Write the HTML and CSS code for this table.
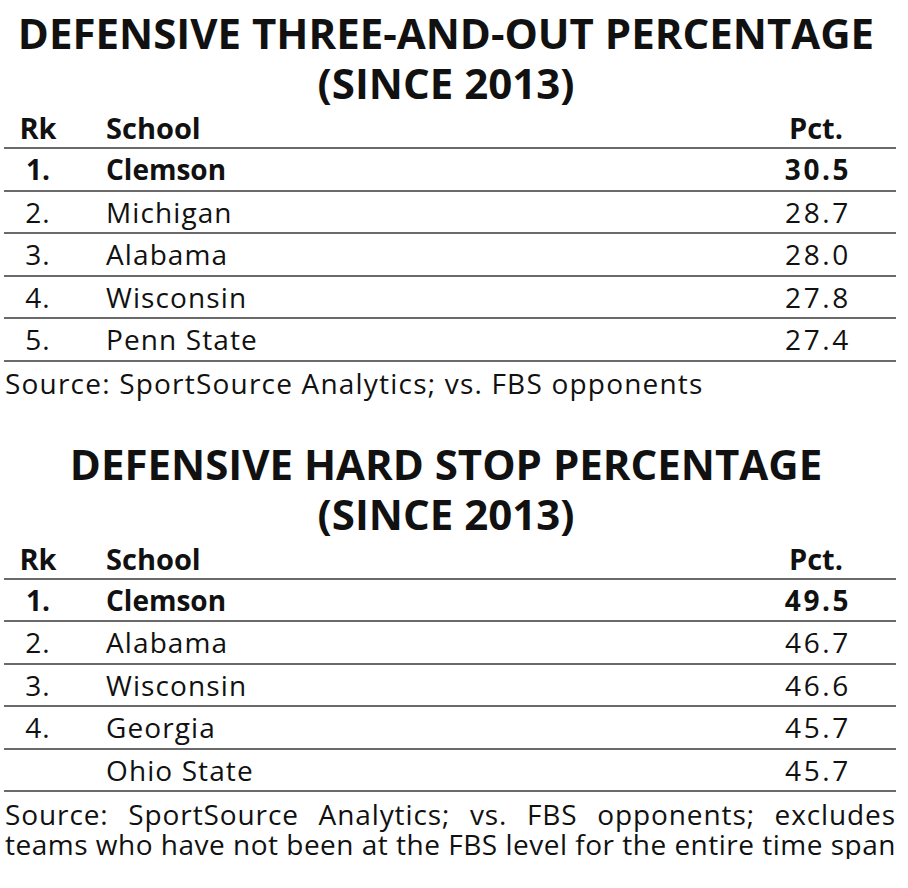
FILE: index.html
```html
<!DOCTYPE html>
<html lang="en">
<head>
<meta charset="utf-8">
<title>Defensive percentages</title>
<link rel="stylesheet" href="styles.css">
</head>
<body>
<section class="block">
  <h2 class="title">DEFENSIVE THREE-AND-OUT PERCENTAGE<br>(SINCE 2013)</h2>
  <div class="table">
    <div class="row head"><span class="rk">Rk</span><span class="school">School</span><span class="pct">Pct.</span></div>
    <div class="row lead"><span class="rk">1.</span><span class="school">Clemson</span><span class="pct">30.5</span></div>
    <div class="row"><span class="rk">2.</span><span class="school">Michigan</span><span class="pct">28.7</span></div>
    <div class="row"><span class="rk">3.</span><span class="school">Alabama</span><span class="pct">28.0</span></div>
    <div class="row"><span class="rk">4.</span><span class="school">Wisconsin</span><span class="pct">27.8</span></div>
    <div class="row"><span class="rk">5.</span><span class="school">Penn State</span><span class="pct">27.4</span></div>
  </div>
  <p class="source">Source: SportSource Analytics; vs. FBS opponents</p>
</section>
<section class="block second">
  <h2 class="title">DEFENSIVE HARD STOP PERCENTAGE<br>(SINCE 2013)</h2>
  <div class="table">
    <div class="row head"><span class="rk">Rk</span><span class="school">School</span><span class="pct">Pct.</span></div>
    <div class="row lead"><span class="rk">1.</span><span class="school">Clemson</span><span class="pct">49.5</span></div>
    <div class="row"><span class="rk">2.</span><span class="school">Alabama</span><span class="pct">46.7</span></div>
    <div class="row"><span class="rk">3.</span><span class="school">Wisconsin</span><span class="pct">46.6</span></div>
    <div class="row"><span class="rk">4.</span><span class="school">Georgia</span><span class="pct">45.7</span></div>
    <div class="row"><span class="rk"></span><span class="school">Ohio State</span><span class="pct">45.7</span></div>
  </div>
  <p class="source justify">Source: SportSource Analytics; vs. FBS opponents; excludes <span class="keep">teams who have not been at the FBS level for the entire time span</span></p>
</section>
</body>
</html>
```
FILE: styles.css
```css
html, body {
  margin: 0;
  padding: 0;
  background: #fff;
  color: #111;
}
body {
  font-family: "Open Sans", "Liberation Sans", sans-serif;
  padding: 8px 12px 0 4px;
}
.block {
  display: flex;
  flex-direction: column;
}
.second {
  margin-top: 41px;
}
.title {
  margin: 0;
  font-size: 42px;
  line-height: 50px;
  font-weight: 700;
  text-align: center;
  white-space: nowrap;
  padding-right: 8px;
}
.table {
  display: flex;
  flex-direction: column;
}
.row {
  display: grid;
  grid-template-columns: 68px 1fr 160px;
  align-items: center;
  height: 40.5px;
  border-bottom: 2px solid #6a6a6a;
  font-size: 28px;
  letter-spacing: 1.1px;
}
.row.head {
  height: 39px;
  font-weight: 700;
  font-size: 29px;
  letter-spacing: 0;
}
.row.lead {
  font-weight: 700;
  letter-spacing: 0;
}
.rk {
  text-align: center;
}
.school {
  padding-left: 34px;
}
.pct {
  text-align: center;
  letter-spacing: 2.6px;
  padding-left: 4px;
}
.row.head .pct {
  letter-spacing: 0;
  padding-left: 0;
}
.source {
  margin: 7px 0 0 1px;
  font-size: 28px;
  line-height: 29px;
  letter-spacing: 1.2px;
}
.justify {
  text-align: justify;
  letter-spacing: 0.9px;
  line-height: 30px;
}
.keep {
  white-space: nowrap;
  letter-spacing: 0.5px;
}
```
